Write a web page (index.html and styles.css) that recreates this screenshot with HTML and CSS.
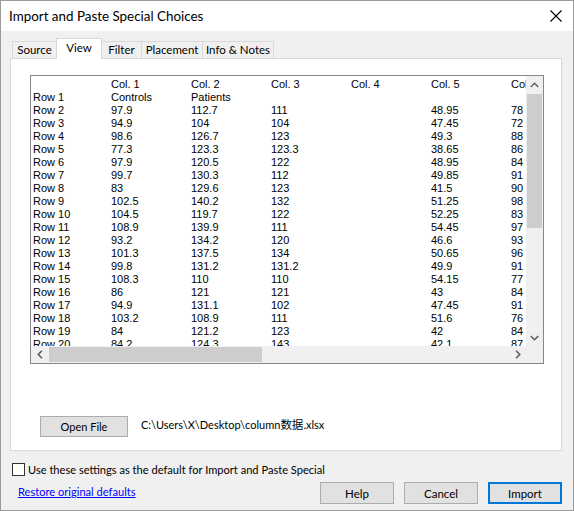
FILE: index.html
```html
<!DOCTYPE html>
<html>
<head>
<meta charset="utf-8">
<link rel="stylesheet" href="styles.css">
</head>
<body>
<div class="window">
  <div class="titlebar">
    <span class="title">Import and Paste Special Choices</span>
    <svg class="close" width="12" height="12" viewBox="0 0 12 12"><path d="M0.5 0.5 L11.5 11.5 M11.5 0.5 L0.5 11.5" stroke="#000" stroke-width="1.1" fill="none"/></svg>
  </div>
  <div class="content">
    <div class="tabs">
      <div class="tab t-source">Source</div>
      <div class="tab t-view active">View</div>
      <div class="tab t-filter">Filter</div>
      <div class="tab t-place">Placement</div>
      <div class="tab t-info">Info &amp; Notes</div>
    </div>
    <div class="panel">
      <div class="gridbox">
        <div class="gridview">
          <table class="data">
            <colgroup><col class="c0"><col class="cn"><col class="cn"><col class="cn"><col class="cn"><col class="cn"><col class="cn"></colgroup>
            <tr><td></td><td>Col. 1</td><td>Col. 2</td><td>Col. 3</td><td>Col. 4</td><td>Col. 5</td><td>Col. 6</td></tr>
            <tr><td>Row 1</td><td>Controls</td><td>Patients</td><td></td><td></td><td></td><td></td></tr>
            <tr><td>Row 2</td><td>97.9</td><td>112.7</td><td>111</td><td></td><td>48.95</td><td>78</td></tr>
            <tr><td>Row 3</td><td>94.9</td><td>104</td><td>104</td><td></td><td>47.45</td><td>72</td></tr>
            <tr><td>Row 4</td><td>98.6</td><td>126.7</td><td>123</td><td></td><td>49.3</td><td>88</td></tr>
            <tr><td>Row 5</td><td>77.3</td><td>123.3</td><td>123.3</td><td></td><td>38.65</td><td>86</td></tr>
            <tr><td>Row 6</td><td>97.9</td><td>120.5</td><td>122</td><td></td><td>48.95</td><td>84</td></tr>
            <tr><td>Row 7</td><td>99.7</td><td>130.3</td><td>112</td><td></td><td>49.85</td><td>91</td></tr>
            <tr><td>Row 8</td><td>83</td><td>129.6</td><td>123</td><td></td><td>41.5</td><td>90</td></tr>
            <tr><td>Row 9</td><td>102.5</td><td>140.2</td><td>132</td><td></td><td>51.25</td><td>98</td></tr>
            <tr><td>Row 10</td><td>104.5</td><td>119.7</td><td>122</td><td></td><td>52.25</td><td>83</td></tr>
            <tr><td>Row 11</td><td>108.9</td><td>139.9</td><td>111</td><td></td><td>54.45</td><td>97</td></tr>
            <tr><td>Row 12</td><td>93.2</td><td>134.2</td><td>120</td><td></td><td>46.6</td><td>93</td></tr>
            <tr><td>Row 13</td><td>101.3</td><td>137.5</td><td>134</td><td></td><td>50.65</td><td>96</td></tr>
            <tr><td>Row 14</td><td>99.8</td><td>131.2</td><td>131.2</td><td></td><td>49.9</td><td>91</td></tr>
            <tr><td>Row 15</td><td>108.3</td><td>110</td><td>110</td><td></td><td>54.15</td><td>77</td></tr>
            <tr><td>Row 16</td><td>86</td><td>121</td><td>121</td><td></td><td>43</td><td>84</td></tr>
            <tr><td>Row 17</td><td>94.9</td><td>131.1</td><td>102</td><td></td><td>47.45</td><td>91</td></tr>
            <tr><td>Row 18</td><td>103.2</td><td>108.9</td><td>111</td><td></td><td>51.6</td><td>76</td></tr>
            <tr><td>Row 19</td><td>84</td><td>121.2</td><td>123</td><td></td><td>42</td><td>84</td></tr>
            <tr><td>Row 20</td><td>84.2</td><td>124.3</td><td>143</td><td></td><td>42.1</td><td>87</td></tr>
          </table>
        </div>
        <div class="vscroll">
          <div class="sbtn"><svg width="9" height="6" viewBox="0 0 9 6"><polyline points="0.8,5 4.5,1.3 8.2,5" fill="none" stroke="#606060" stroke-width="1.6"/></svg></div>
          <div class="vthumb"></div>
          <div class="strack"></div>
          <div class="sbtn"><svg width="9" height="6" viewBox="0 0 9 6"><polyline points="0.8,1 4.5,4.7 8.2,1" fill="none" stroke="#606060" stroke-width="1.6"/></svg></div>
        </div>
        <div class="hscroll">
          <div class="sbtn"><svg width="6" height="9" viewBox="0 0 6 9"><polyline points="5,0.8 1.3,4.5 5,8.2" fill="none" stroke="#606060" stroke-width="1.6"/></svg></div>
          <div class="hthumb"></div>
          <div class="strack"></div>
          <div class="sbtn"><svg width="6" height="9" viewBox="0 0 6 9"><polyline points="1,0.8 4.7,4.5 1,8.2" fill="none" stroke="#606060" stroke-width="1.6"/></svg></div>
        </div>
        <div class="corner"></div>
      </div>
      <div class="filerow">
        <div class="btn openbtn">Open File</div>
        <span class="path">C:\Users\X\Desktop\column<span class="cjk">数据</span>.xlsx</span>
      </div>
    </div>
    <div class="checkrow">
      <span class="checkbox"></span>
      <span class="checklabel">Use these settings as the default for Import and Paste Special</span>
    </div>
    <div class="footer">
      <a class="link" href="#">Restore original defaults</a>
      <div class="buttons">
        <div class="btn">Help</div>
        <div class="btn">Cancel</div>
        <div class="btn default">Import</div>
      </div>
    </div>
  </div>
</div>
</body>
</html>
```
FILE: styles.css
```css
html, body {
  margin: 0;
  padding: 0;
}
body {
  width: 574px;
  height: 511px;
  overflow: hidden;
  font-family: "Lato", "Noto Sans CJK SC", sans-serif;
  font-size: 11px;
  color: #000;
}
.window {
  box-sizing: border-box;
  width: 574px;
  height: 511px;
  border: 1px solid #9a9a9a;
  background: #f0f0f0;
  display: flex;
  flex-direction: column;
}
.titlebar {
  height: 30px;
  flex: none;
  background: #fff;
  display: flex;
  align-items: center;
  justify-content: space-between;
  padding: 0 11px 0 8px;
}
.title {
  font-size: 13.4px;
  margin-top: -1px;
}
.close {
  display: block;
  margin-top: -1px;
}
.content {
  flex: 1;
  display: flex;
  flex-direction: column;
  padding: 7px 11px 0 9px;
}
.tabs {
  display: flex;
  align-items: flex-end;
  height: 21px;
  padding-left: 2px;
  margin-bottom: -1px;
  position: relative;
  z-index: 1;
}
.tab {
  box-sizing: border-box;
  height: 17px;
  margin-bottom: 1px;
  border: 1px solid #d9d9d9;
  border-bottom: none;
  background: #f0f0f0;
  line-height: 16px;
  font-size: 11.5px;
  text-align: center;
  white-space: nowrap;
}
.tab + .tab { margin-left: -1px; }
.tab.active {
  height: 21px;
  margin-bottom: 0;
  background: #fff;
  line-height: 17px;
  position: relative;
  z-index: 2;
}
.t-source { width: 45px; }
.t-view { width: 46px; }
.t-filter { width: 41px; }
.t-place { width: 62px; }
.t-info { width: 72px; }
.panel {
  box-sizing: border-box;
  height: 393px;
  flex: none;
  background: #fff;
  border: 1px solid #d9d9d9;
  padding: 16px 0 0 19px;
}
.gridbox {
  box-sizing: border-box;
  width: 514px;
  height: 289px;
  border: 1px solid #828790;
  display: grid;
  grid-template-columns: 1fr 17px;
  grid-template-rows: 1fr 17px;
}
.gridview {
  overflow: hidden;
  padding-top: 2px;
}
.data {
  table-layout: fixed;
  border-collapse: collapse;
  width: 560px;
  font-family: "Liberation Sans", sans-serif;
  font-size: 11px;
}
.data .c0 { width: 80px; }
.data .cn { width: 80px; }
.data td {
  padding: 0;
  height: 13px;
  line-height: 13px;
  white-space: nowrap;
  overflow: hidden;
}
.data td:first-child { padding-left: 2px; }
.vscroll {
  background: #f0f0f0;
  display: flex;
  flex-direction: column;
}
.hscroll {
  background: #f0f0f0;
  display: flex;
}
.corner { background: #f0f0f0; }
.sbtn {
  width: 17px;
  height: 17px;
  flex: none;
  display: flex;
  align-items: center;
  justify-content: center;
}
.vthumb {
  height: 134px;
  margin: 1px 1px 0 1px;
  background: #cdcdcd;
  flex: none;
}
.hthumb {
  width: 213px;
  margin: 1px 0 1px 1px;
  background: #cdcdcd;
  flex: none;
}
.strack { flex: 1; }
.filerow {
  display: flex;
  align-items: center;
  margin-top: 52px;
  margin-left: 10px;
}
.btn {
  box-sizing: border-box;
  width: 74px;
  height: 22px;
  background: #e1e1e1;
  border: 1px solid #adadad;
  display: flex;
  align-items: center;
  justify-content: center;
  white-space: nowrap;
  font-size: 11.5px;
}
.openbtn {
  width: 88px;
  height: 21px;
  font-size: 11px;
}
.path {
  margin-left: 13px;
  margin-top: -5px;
  font-size: 11px;
}
.path .cjk {
  font-family: "Noto Sans CJK SC", sans-serif;
  font-size: 11.5px;
}
.checkrow {
  display: flex;
  align-items: center;
  margin-top: 12px;
  padding-left: 2px;
  height: 13px;
}
.checkbox {
  box-sizing: border-box;
  width: 13px;
  height: 13px;
  border: 1px solid #333;
  background: #fff;
  flex: none;
}
.checklabel {
  margin-left: 3px;
  font-size: 11.1px;
}
.footer {
  display: flex;
  align-items: center;
  justify-content: space-between;
  margin-top: 6px;
}
.link {
  color: #0000ff;
  margin-left: 8px;
  margin-top: -3px;
  font-size: 11.1px;
}
.buttons {
  display: flex;
  gap: 10px;
}
.btn.default {
  border: 2px solid #0078d7;
}
```
